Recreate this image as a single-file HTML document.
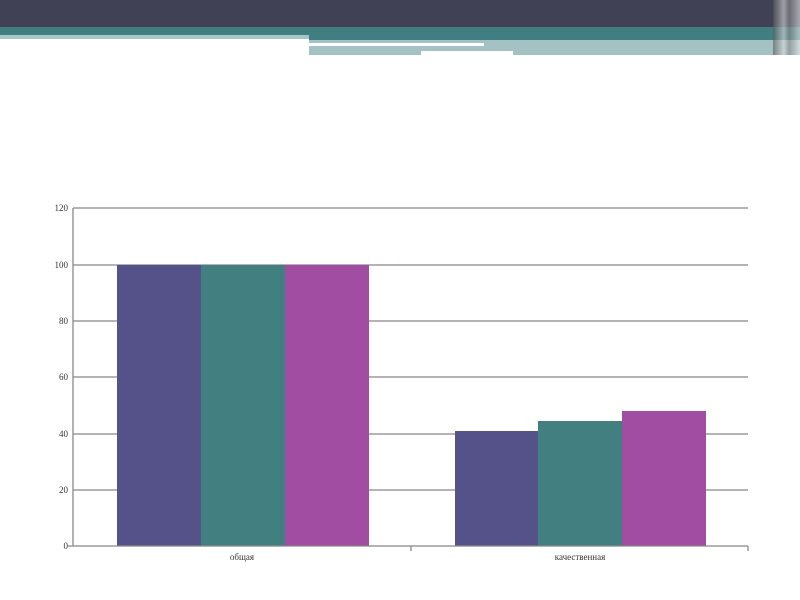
<html><body style="margin:0;width:800px;height:600px;position:relative;background:#fff;overflow:hidden;font-family:'Liberation Serif',serif">
<div style="position:absolute;left:0;top:0;width:800px;height:27px;background:#414155"></div>
<div style="position:absolute;left:0;top:27px;width:800px;height:8px;background:#417e81"></div>
<div style="position:absolute;left:0;top:35px;width:309px;height:4px;background:#a6c4c6"></div>
<div style="position:absolute;left:309px;top:35px;width:491px;height:5px;background:#417e81"></div>
<div style="position:absolute;left:309px;top:40px;width:491px;height:15px;background:#a4c1c4"></div>
<div style="position:absolute;left:309px;top:43px;width:175px;height:3px;background:#fff"></div>
<div style="position:absolute;left:421px;top:51px;width:92px;height:4px;background:#fff"></div>
<div style="position:absolute;left:773px;top:0;width:27px;height:55px;background:linear-gradient(90deg,#555 0,#999 20%,#ddd 40%,#888 60%,#bbb 80%,#eee 100%);opacity:.6"></div>
<svg width="800" height="600" style="position:absolute;left:0;top:0" font-family="Liberation Serif" font-size="9" fill="#333">
<g stroke="#888" stroke-width="1.3">
<line x1="73" y1="208" x2="748" y2="208"/><line x1="73" y1="265" x2="748" y2="265"/><line x1="73" y1="321" x2="748" y2="321"/><line x1="73" y1="377" x2="748" y2="377"/><line x1="73" y1="434" x2="748" y2="434"/><line x1="73" y1="490" x2="748" y2="490"/>
</g>
<rect x="117" y="265" width="84" height="281" fill="#545288"/>
<rect x="201" y="265" width="84" height="281" fill="#427f81"/>
<rect x="285" y="265" width="84" height="281" fill="#a04da2"/>
<rect x="455" y="431" width="83" height="115" fill="#545288"/>
<rect x="538" y="421" width="84" height="125" fill="#427f81"/>
<rect x="622" y="411" width="84" height="135" fill="#a04da2"/>
<g stroke="#888" stroke-width="1.3">
<line x1="73" y1="208" x2="73" y2="546"/><line x1="68" y1="546" x2="748" y2="546"/><line x1="411" y1="546" x2="411" y2="551"/><line x1="748" y1="546" x2="748" y2="551"/>
</g>
<g text-anchor="end"><text x="68" y="211">120</text><text x="68" y="268">100</text><text x="68" y="324">80</text><text x="68" y="380">60</text><text x="68" y="437">40</text><text x="68" y="493">20</text><text x="68" y="549">0</text></g>
<text x="242" y="560" text-anchor="middle">общая</text>
<text x="580" y="560" text-anchor="middle">качественная</text>
</svg>
</body></html>
